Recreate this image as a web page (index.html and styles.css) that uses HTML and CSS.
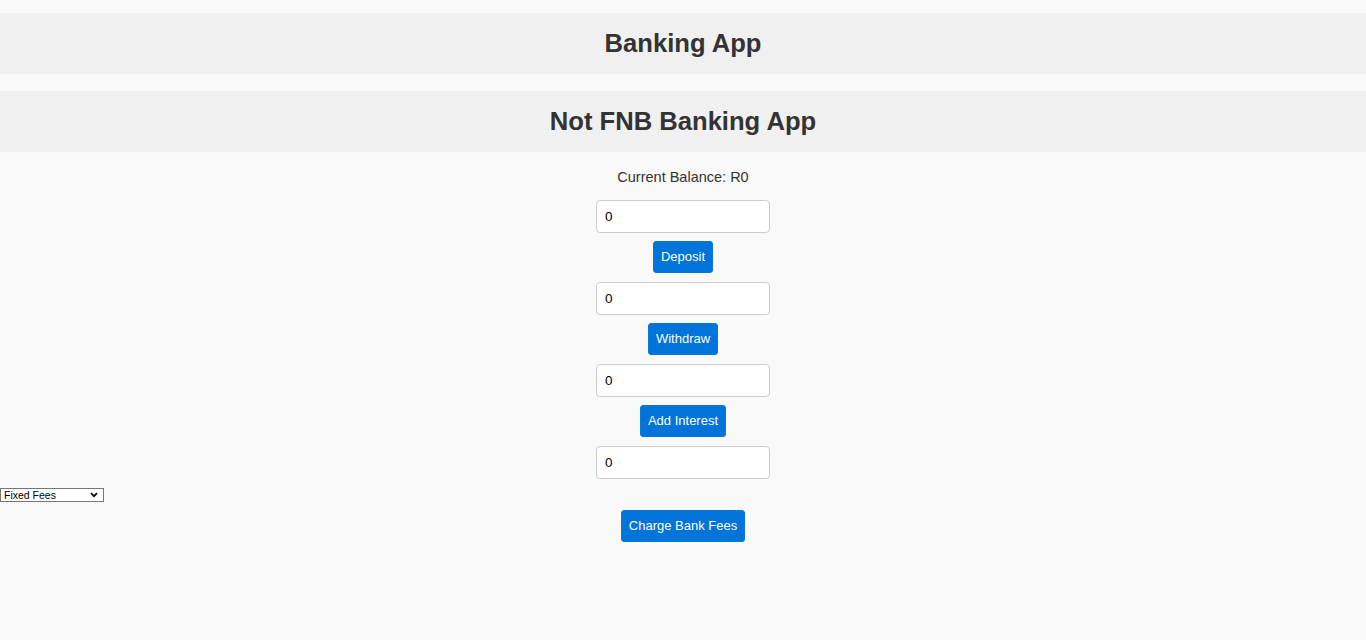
FILE: index.html
```html
<!DOCTYPE html>
<html lang="en">
<head>
<meta charset="utf-8">
<title>Banking App</title>
<link rel="stylesheet" href="styles.css">
</head>
<body>
  <header class="app-header">
    <h1 class="app-title">Banking App</h1>
  </header>
  <section class="bank">
    <h1 class="bank-title">Not FNB Banking App</h1>
    <div class="controls">
      <p class="balance">Current Balance: R0</p>
      <input class="amount" type="number" value="0">
      <button class="btn">Deposit</button>
      <input class="amount" type="number" value="0">
      <button class="btn">Withdraw</button>
      <input class="amount" type="number" value="0">
      <button class="btn">Add Interest</button>
      <input class="amount amount-last" type="number" value="0">
      <div class="select-wrap">
        <select class="fee-select">
          <option>Fixed Fees</option>
          <option>Percentage Fees</option>
        </select>
        <svg class="chev" width="8" height="6" viewBox="0 0 8 6"><path d="M1 1.2 L4 4.2 L7 1.2" fill="none" stroke="#000" stroke-width="1.8"/></svg>
      </div>
      <button class="btn">Charge Bank Fees</button>
    </div>
  </section>
</body>
</html>
```

FILE: styles.css
```css
html, body {
  margin: 0;
  padding: 0;
  background: #f9f9f9;
  font-family: "Liberation Sans", Arial, sans-serif;
  color: #333;
}

body {
  padding-top: 13px;
}

.app-header {
  margin: 0 0 17px;
}

.app-title,
.bank-title {
  margin: 0;
  height: 61px;
  line-height: 61px;
  background: #f0f0f0;
  text-align: center;
  font-size: 25.6px;
  font-weight: bold;
  color: #333;
}

.controls {
  display: flex;
  flex-direction: column;
  align-items: center;
  padding-top: 17px;
}

.balance {
  margin: 0 0 14px;
  font-size: 14.5px;
  line-height: 17px;
  color: #333;
}

.amount {
  box-sizing: border-box;
  width: 174px;
  height: 33px;
  padding: 0 8px;
  margin: 0 0 8px;
  border: 1px solid #ccc;
  border-radius: 4px;
  background: #fff;
  font-family: "Liberation Sans", Arial, sans-serif;
  font-size: 13.5px;
  color: #000;
  -moz-appearance: textfield;
}

.amount::-webkit-outer-spin-button,
.amount::-webkit-inner-spin-button {
  -webkit-appearance: none;
  margin: 0;
}

.amount-last {
  margin-bottom: 9px;
}

.btn {
  box-sizing: border-box;
  height: 32px;
  padding: 0 7px;
  margin: 0 0 9px;
  border: 1px solid #0a78d8;
  border-radius: 3px;
  background: #0074d9;
  color: #fff;
  font-family: "Liberation Sans", Arial, sans-serif;
  font-size: 13px;
  line-height: 16px;
  cursor: pointer;
}

.select-wrap {
  position: relative;
  align-self: flex-start;
  width: 104px;
  height: 14px;
  margin: 0 0 8px;
}

.fee-select {
  -webkit-appearance: none;
  appearance: none;
  box-sizing: border-box;
  display: block;
  width: 104px;
  height: 14px;
  margin: 0;
  padding: 0 0 0 3px;
  border: 1px solid #767676;
  border-radius: 0;
  background: #fff;
  font-family: "Liberation Sans", Arial, sans-serif;
  font-size: 10.5px;
  line-height: 12px;
  color: #000;
}

.chev {
  position: absolute;
  right: 6px;
  top: 4px;
  pointer-events: none;
}
```
